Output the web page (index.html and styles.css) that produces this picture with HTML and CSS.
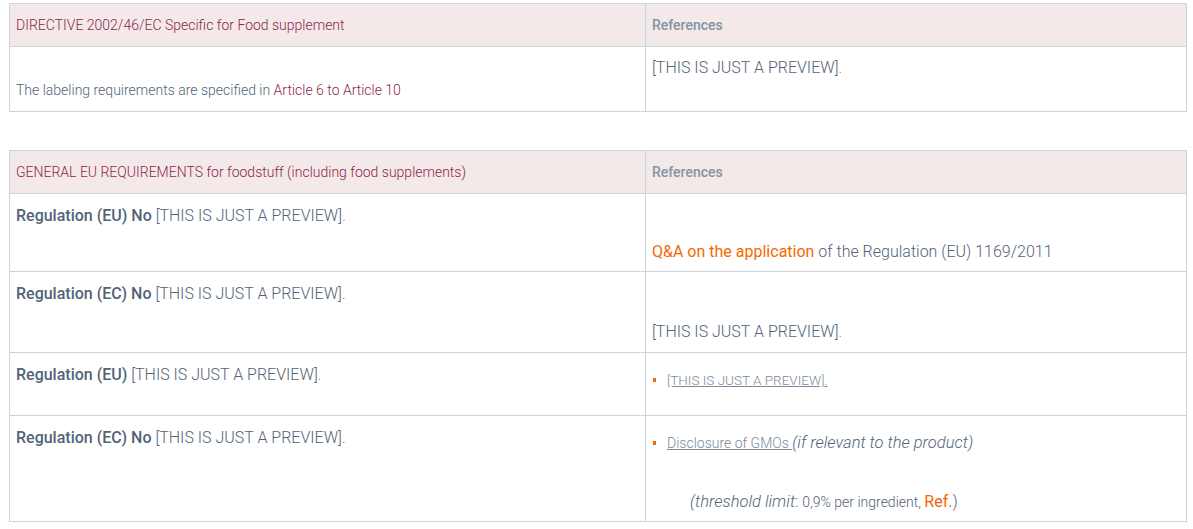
FILE: index.html
```html
<!DOCTYPE html>
<html lang="en">
<head>
<meta charset="utf-8">
<title>Food supplement labeling requirements</title>
<link rel="stylesheet" href="styles.css">
</head>
<body>
<div class="page">
  <table class="req">
    <thead>
      <tr class="head">
        <th class="c-left">DIRECTIVE 2002/46/EC Specific for Food supplement</th>
        <th class="c-right ref-head">References</th>
      </tr>
    </thead>
    <tbody>
      <tr class="r-a">
        <td class="c-left small"><p class="low">The labeling requirements are specified in <a class="maroon" href="#">Article 6 to Article 10</a></p></td>
        <td class="c-right"><p class="first">[THIS IS JUST A PREVIEW]<span class="or">.</span></p></td>
      </tr>
    </tbody>
  </table>

  <table class="req second">
    <thead>
      <tr class="head">
        <th class="c-left">GENERAL EU REQUIREMENTS for foodstuff (including food supplements)</th>
        <th class="c-right ref-head">References</th>
      </tr>
    </thead>
    <tbody>
      <tr class="r-1">
        <td class="c-left"><p><b>Regulation (EU) No</b> [THIS IS JUST A PREVIEW]<span class="or">.</span></p></td>
        <td class="c-right"><p class="deep"><a class="orange" href="#">Q&amp;A on the application</a> of the Regulation (EU) 1169/2011</p></td>
      </tr>
      <tr class="r-2">
        <td class="c-left"><p><b>Regulation (EC) No</b> [THIS IS JUST A PREVIEW]<span class="or">.</span></p></td>
        <td class="c-right"><p class="deep2">[THIS IS JUST A PREVIEW]<span class="or">.</span></p></td>
      </tr>
      <tr class="r-3">
        <td class="c-left"><p><b>Regulation (EU)</b> [THIS IS JUST A PREVIEW]<span class="or">.</span></p></td>
        <td class="c-right">
          <ul class="bullets">
            <li><a class="ul-link" href="#">[THIS IS JUST A PREVIEW]<span class="or">.</span></a></li>
          </ul>
        </td>
      </tr>
      <tr class="r-4">
        <td class="c-left"><p><b>Regulation (EC) No</b> [THIS IS JUST A PREVIEW]<span class="or">.</span></p></td>
        <td class="c-right">
          <ul class="bullets b4">
            <li><a class="ul-link" href="#">Disclosure of GMOs </a><i class="it">(if relevant to the product)</i></li>
          </ul>
          <p class="thresh"><i class="it">(threshold limit</i>: <span class="sm">0,9% per ingredient, </span><a class="orange" href="#">Ref.</a>)</p>
        </td>
      </tr>
    </tbody>
  </table>
</div>
</body>
</html>
```

FILE: styles.css
```css
html, body {
  margin: 0;
  padding: 0;
  background: #ffffff;
}
body {
  font-family: Roboto, "Liberation Sans", sans-serif;
  color: #526477;
}
.page {
  padding: 3px 6px 0 9px;
}
.req {
  width: 1178px;
  border-collapse: collapse;
  border: 1px solid #cad5df;
  table-layout: fixed;
}
.req.second {
  margin-top: 38px;
}
.req th, .req td {
  border: 1px solid #cad5df;
  text-align: left;
  vertical-align: top;
  padding: 0 6px;
}
.c-left { width: 623px; }
.head th {
  background: #f2e9e8;
  height: 42px;
  padding: 0 6px;
  vertical-align: middle;
  font-size: 14px;
  font-weight: 300;
  color: #8e1f4f;
}
.head th.ref-head {
  color: #8494a3;
  font-weight: 500;
  font-size: 14px;
}
p { margin: 0; }
td {
  font-size: 16px;
  font-weight: 300;
  line-height: 22px;
}
td p { padding-top: 11px; }
b { font-weight: 500; color: #526477; }
.or { color: #f56800; }
a { text-decoration: none; }
.maroon { color: #8e1f4f; font-weight: 300; }
.orange { color: #f56800; font-weight: 400; }
.small { font-size: 14px; }
.small p.low { padding-top: 33px; line-height: 20px; }
td p.first { padding-top: 10px; }
.r-a td { height: 64px; }
.r-1 td { height: 77px; }
.r-2 td { height: 80px; }
.r-3 td { height: 62px; }
.r-4 td { height: 105px; }
td p.deep { padding-top: 47px; }
td p.deep2 { padding-top: 49px; }
.bullets {
  margin: 0;
  padding: 17px 0 0 15px;
  list-style: none;
}
.bullets li {
  position: relative;
  font-size: 13.5px;
  line-height: 20px;
}
.bullets li::before {
  content: "";
  position: absolute;
  left: -14px;
  top: 8px;
  width: 3px;
  height: 4px;
  background: #f56800;
}
.b4 { padding-top: 17px; }
.b4 li { font-size: 14px; }
.ul-link {
  color: #7a8b9c;
  text-decoration: underline;
  font-weight: 300;
}
.it { font-size: 16.5px; font-style: italic; }
.thresh {
  padding: 0 0 0 38px;
  margin-top: 38px;
}
td p.thresh { padding-top: 0; }
.sm { font-size: 14px; font-weight: 300; }
```
